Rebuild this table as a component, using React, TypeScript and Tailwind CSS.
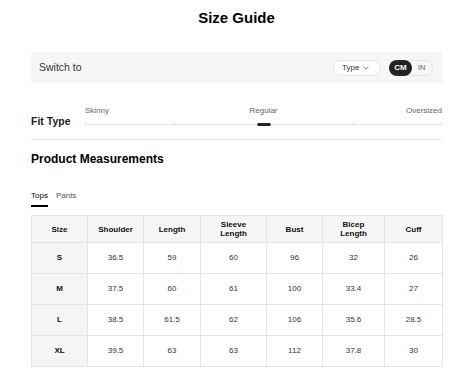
import React from 'react';

const headers = ['Size', 'Shoulder', 'Length', 'Sleeve Length', 'Bust', 'Bicep Length', 'Cuff'];
const colWidths = [56, 56, 57, 66, 56, 62, 58];

const rows = [
    ['S', '36.5', '59', '60', '96', '32', '26'],
    ['M', '37.5', '60', '61', '100', '33.4', '27'],
    ['L', '38.5', '61.5', '62', '106', '35.6', '28.5'],
    ['XL', '39.5', '63', '63', '112', '37.8', '30'],
];

export default function App() {
    return (
        <div className="w-[454px] h-[376px] overflow-hidden bg-white pl-[31px] pr-[12px] font-['Liberation_Sans',Arial,sans-serif] text-[#222]">
            <h1 className="pt-[9px] text-center text-[15px] font-bold leading-[18px] text-black">Size Guide</h1>

            {/* Switch bar */}
            <div className="mt-[25px] flex h-[31px] items-center justify-between bg-[#f6f6f6] pl-[8px] pr-[9px]">
                <span className="text-[10.5px] text-[#333]">Switch to</span>
                <div className="flex items-center gap-[8px]">
                    <button className="flex h-[16px] w-[48px] items-center gap-[4px] rounded-full border border-[#e3e3e3] bg-white pl-[8px] text-[8px] leading-none text-[#333]">
                        Type
                        <svg width="6" height="4" viewBox="0 0 6 4" fill="none">
                            <path d="M0.5 0.8 L3 3.2 L5.5 0.8" stroke="#555" strokeWidth="0.8" />
                        </svg>
                    </button>
                    <div className="flex h-[16px] w-[44px] items-center rounded-full border border-[#e6e6e6] bg-[#f8f8f8]">
                        <span className="flex h-[16px] w-[23px] -ml-px items-center justify-center rounded-full bg-[#222] text-[8px] font-bold leading-none text-white">
                            CM
                        </span>
                        <span className="ml-[6px] text-[7.5px] leading-none text-[#666]">IN</span>
                    </div>
                </div>
            </div>

            {/* Fit type */}
            <div className="mt-[23px] flex items-end">
                <span className="w-[54px] text-[10.5px] font-bold leading-[12px] text-[#222]">Fit Type</span>
                <div className="flex-1">
                    <div className="grid grid-cols-3 text-[8px] leading-[10px] text-[#666]">
                        <span className="text-left">Skinny</span>
                        <span className="text-center">Regular</span>
                        <span className="text-right">Oversized</span>
                    </div>
                    <div className="relative mt-[6px] h-[5px]">
                        <div className="absolute left-0 right-0 top-[2px] h-px bg-[#e6e6e6]" />
                        <div className="absolute left-0 top-[0px] h-[3px] w-px bg-[#ddd]" />
                        <div className="absolute left-1/4 top-[0px] h-[3px] w-px bg-[#ddd]" />
                        <div className="absolute left-3/4 top-[0px] h-[3px] w-px bg-[#ddd]" />
                        <div className="absolute right-0 top-[0px] h-[3px] w-px bg-[#ddd]" />
                        <div className="absolute left-1/2 top-[1px] h-[3px] w-[13px] -translate-x-1/2 bg-[#222]" />
                    </div>
                </div>
            </div>

            <div className="mt-[12px] h-px bg-[#e8e8e8]" />

            <h2 className="mt-[12px] text-[12px] font-bold leading-[14px] text-black">Product Measurements</h2>

            {/* Tabs */}
            <div className="mt-[25px] flex gap-[8px] text-[8px] leading-[10px]">
                <span className="border-b-2 border-black pb-[4px] text-black">Tops</span>
                <span className="text-[#555]">Pants</span>
            </div>

            {/* Table */}
            <table className="mt-[8px] w-[411px] table-fixed border-collapse text-center text-[8px]">
                <colgroup>
                    {colWidths.map((w, i) => (
                        <col key={i} style={{ width: w }} />
                    ))}
                </colgroup>
                <thead>
                    <tr className="h-[27px]">
                        {headers.map((h) => (
                            <th
                                key={h}
                                className="border border-[#e4e4e4] bg-[#f5f5f5] px-[4px] font-bold leading-[9px] text-[#111]"
                            >
                                {h.includes(' ') ? (
                                    <>
                                        {h.split(' ')[0]}
                                        <br />
                                        {h.split(' ')[1]}
                                    </>
                                ) : (
                                    h
                                )}
                            </th>
                        ))}
                    </tr>
                </thead>
                <tbody>
                    {rows.map((r) => (
                        <tr key={r[0]} className="h-[31px]">
                            {r.map((v, i) => (
                                <td
                                    key={i}
                                    className={
                                        i === 0
                                            ? 'border border-[#e4e4e4] bg-[#f5f5f5] font-bold text-[#111]'
                                            : 'border border-[#e4e4e4] text-[#333]'
                                    }
                                >
                                    {v}
                                </td>
                            ))}
                        </tr>
                    ))}
                </tbody>
            </table>
        </div>
    );
}
